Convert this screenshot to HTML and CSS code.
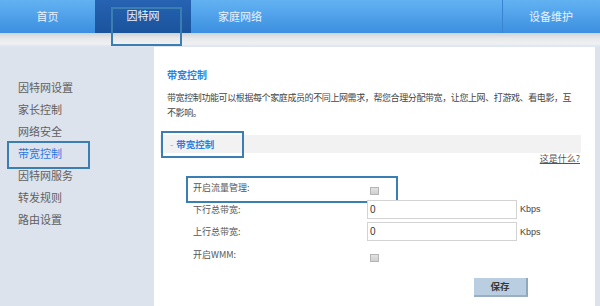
FILE: index.html
```html
<!DOCTYPE html>
<html lang="zh-CN">
<head>
<meta charset="utf-8">
<title>带宽控制</title>
<link rel="stylesheet" href="styles.css">
</head>
<body>
<div class="page">
  <header class="topnav">
    <a class="tab tab-home">首页</a>
    <a class="tab tab-active">因特网</a>
    <a class="tab tab-family">家庭网络</a>
    <span class="nav-fill"></span>
    <a class="tab tab-device">设备维护</a>
  </header>
  <div class="subband"></div>
  <div class="main">
    <nav class="sidebar">
      <a class="side-item">因特网设置</a>
      <a class="side-item">家长控制</a>
      <a class="side-item">网络安全</a>
      <a class="side-item side-active">带宽控制</a>
      <a class="side-item">因特网服务</a>
      <a class="side-item">转发规则</a>
      <a class="side-item">路由设置</a>
    </nav>
    <section class="panel">
      <h1 class="title">带宽控制</h1>
      <p class="desc">带宽控制功能可以根据每个家庭成员的不同上网需求，帮您合理分配带宽，让您上网、打游戏、看电影，互不影响。</p>
      <div class="section-bar"><span class="dash">-</span><span class="section-name">带宽控制</span></div>
      <div class="help-row"><a class="help">这是什么?</a></div>
      <div class="form">
        <div class="row row-first">
          <span class="label">开启流量管理:</span>
          <input type="checkbox" class="check check-low">
        </div>
        <div class="row">
          <span class="label">下行总带宽:</span>
          <input type="text" class="field" value="0">
          <span class="unit">Kbps</span>
        </div>
        <div class="row row-tall">
          <span class="label">上行总带宽:</span>
          <input type="text" class="field" value="0">
          <span class="unit">Kbps</span>
        </div>
        <div class="row">
          <span class="label">开启WMM:</span>
          <input type="checkbox" class="check check-low">
        </div>
        <div class="actions">
          <button class="save">保存</button>
        </div>
      </div>
    </section>
  </div>
</div>
</body>
</html>
```
FILE: styles.css
```css
* { box-sizing: border-box; }
html, body { margin: 0; padding: 0; }
body {
  width: 600px;
  height: 306px;
  overflow: hidden;
  background: #dce3ed;
  font-family: "Noto Sans CJK SC", "Noto Sans", sans-serif;
  color: #555;
}
.page { width: 600px; height: 306px; display: flex; flex-direction: column; }

.topnav {
  height: 33px;
  display: flex;
  background: linear-gradient(#62b2f2, #3c8fe0);
  position: relative;
}
.tab {
  display: flex;
  align-items: center;
  justify-content: center;
  color: #e9f2ff;
  font-size: 11px;
  line-height: 1;
  text-decoration: none;
}
.tab-home { width: 95px; }
.tab-active {
  width: 96px;
  background: linear-gradient(#2663b2, #1b539d);
  color: #eef4ff;
  position: relative;
  padding-bottom: 2px;
}
.tab-active::after {
  content: "";
  position: absolute;
  left: 16px;
  top: 7px;
  width: 67px;
  height: 35px;
  border: 2px solid #3b7fb2;
  z-index: 3;
}
.tab-family { width: 98px; }
.nav-fill { flex: 1; }
.tab-device {
  width: 97px;
  border-left: 1px solid #3a82d2;
  margin-right: 1px;
}

.subband {
  height: 14px;
  background: linear-gradient(#cfd2d6, #e8e9eb 40%, #eef0f2 75%, #dde4ee);
}

.main { flex: 1; display: flex; }

.sidebar {
  width: 154px;
  padding-top: 29px;
  display: flex;
  flex-direction: column;
}
.side-item {
  position: relative;
  height: 22px;
  line-height: 22px;
  padding-left: 18px;
  font-size: 11px;
  color: #606060;
  font-weight: normal;
  text-decoration: none;
}
.side-active { color: #2b78e0; }
.side-active::after {
  content: "";
  position: absolute;
  left: 7px;
  top: -1px;
  width: 79px;
  height: 24px;
  border: 2px solid #3b7fb2;
}

.panel {
  width: 441px;
  background: #fff;
  padding: 22px 14px 0 13px;
}
.title {
  margin: 0;
  font-size: 10px;
  line-height: 12px;
  font-weight: bold;
  color: #2b7fe0;
}
.desc {
  margin: 9px 2px 0 0;
  font-size: 9px;
  letter-spacing: -0.4px;
  line-height: 15px;
  color: #444;
}
.section-bar {
  position: relative;
  margin: 15px 0 0 -7px;
  height: 18px;
  background: #f2f2f2;
  display: flex;
  align-items: center;
  padding-left: 10px;
  font-size: 9.5px;
  font-weight: bold;
  color: #2b7fe0;
}
.section-bar::after {
  content: "";
  position: absolute;
  left: 1px;
  top: -4px;
  width: 79px;
  height: 23px;
  border: 2px solid #3b7fb2;
}
.dash { color: #8aa6c8; margin-right: 3px; font-weight: normal; }
.help-row {
  display: flex;
  justify-content: flex-end;
  height: 11px;
  line-height: 11px;
  padding-right: 1px;
}
.help {
  font-size: 9px;
  color: #555;
  text-decoration: underline;
}

.form {
  margin: 12px 0 0 26px;
  display: flex;
  flex-direction: column;
}
.row {
  position: relative;
  height: 22px;
  display: flex;
  align-items: center;
  font-size: 9px;
  color: #555;
}
.row-tall { height: 23px; }
.row-first::after {
  content: "";
  position: absolute;
  left: -7px;
  top: 0;
  width: 208px;
  height: 23px;
  border: 2px solid #3b7fb2;
}
.label { width: 174px; }
.check {
  appearance: none;
  -webkit-appearance: none;
  margin: 0 0 0 3px;
  width: 9px;
  height: 8px;
  border: 1px solid #b5b5b5;
  background: linear-gradient(#e2e2e2, #cfcfcf);
}
.check-low { margin-top: 7px; }
.field {
  width: 150px;
  height: 19px;
  margin: 0;
  border: 1px solid #d3d3d3;
  padding: 0 2px;
  font-family: "Liberation Sans", sans-serif;
  font-size: 10px;
  color: #333;
  background: #fff;
}
.unit {
  margin-left: 3px;
  font-family: "Liberation Sans", sans-serif;
  font-size: 9px;
  color: #444;
}
.actions {
  margin-top: 6px;
  padding-left: 281px;
}
.save {
  width: 54px;
  height: 19px;
  background: #b9cfe1;
  border: none;
  border-right: 2px solid #8ea8bd;
  border-bottom: 2px solid #9ab0c2;
  font-family: "Noto Sans CJK SC", sans-serif;
  font-size: 9.5px;
  font-weight: bold;
  color: #3a3a3a;
  padding: 0;
}
```
